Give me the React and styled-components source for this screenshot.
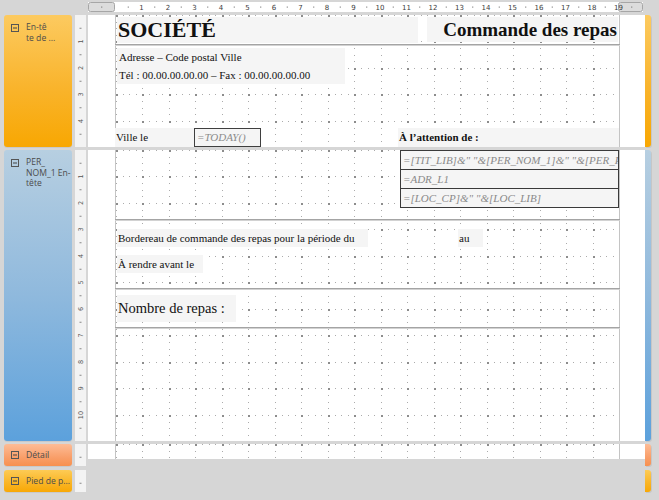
import React from "react";
import styled, { createGlobalStyle } from "styled-components";

const CM = 26.5;

const GlobalStyle = createGlobalStyle`
  html, body { margin: 0; padding: 0; background: #d6d6d6; }
  body { font-family: "Liberation Serif", "Times New Roman", serif; }
  #root { width: 659px; height: 500px; overflow: hidden; }
`;

/* ---------- grid background (designer dots) ---------- */
const gridSvg = (() => {
  const pos = [0, 7, 13, 20, 26, 33, 40, 46];
  let s = "<svg xmlns='http://www.w3.org/2000/svg' width='53' height='53'>";
  pos.forEach((p, i) => {
    if (i % 4 === 0) return;
    [0, 26].forEach((m) => {
      s += `<rect x='${m}' y='${p}' width='1' height='1' fill='#ababab'/>`;
      s += `<rect x='${p}' y='${m}' width='1' height='1' fill='#ababab'/>`;
    });
  });
  [0, 26].forEach((x) =>
    [0, 26].forEach((y) => {
      s += `<rect x='${x}' y='${y}' width='2' height='2' fill='#8c8c8c'/>`;
    })
  );
  s += "</svg>";
  return `url("data:image/svg+xml;utf8,${encodeURIComponent(s)}")`;
})();

/* ---------- layout ---------- */
const Screen = styled.div`
  width: 659px;
  height: 500px;
  padding-top: 2px;
  box-sizing: border-box;
  display: flex;
  flex-direction: column;
`;

const TopRulerWrap = styled.div`
  margin-left: 88px;
  height: 10px;
  margin-bottom: 3px;
  display: flex;
`;

const Sections = styled.div`
  display: flex;
  flex-direction: column;
`;

const SectionRow = styled.div`
  display: flex;
  align-items: flex-start;
  height: ${(p) => p.$h}px;
  padding-left: 4px;
  margin-top: ${(p) => p.$gap || 0}px;
`;

const palettes = {
  orange: "linear-gradient(180deg, #fcca60 0%, #f9b42c 55%, #f8a702 100%)",
  blue: "linear-gradient(180deg, #b7cfe1 0%, #8fb9dd 50%, #5ca1dc 100%)",
  salmon: "linear-gradient(180deg, #fdbc96 0%, #f99f6a 60%, #f7904f 100%)",
  gold: "linear-gradient(180deg, #fdcb55 0%, #f9b424 60%, #f8a805 100%)",
};

const Band = styled.div`
  width: 68px;
  height: 100%;
  box-sizing: border-box;
  border-radius: 3px;
  background: ${(p) => palettes[p.$tone]};
  box-shadow: 0 1px 0 rgba(0, 0, 0, 0.06);
  display: flex;
  align-items: ${(p) => (p.$compact ? "center" : "flex-start")};
  gap: 7px;
  padding: ${(p) => (p.$compact ? "0 0 0 7px" : "9px 0 0 7px")};
`;

const BandLabel = styled.div`
  font-family: "Open Sans", "DejaVu Sans", sans-serif;
  font-size: 8.6px;
  line-height: 10.6px;
  color: #4b4b4b;
  margin-top: ${(p) => (p.$compact ? "0" : "-2px")};
  white-space: nowrap;
`;

const VRulerBox = styled.div`
  margin-left: 3px;
  width: 11px;
  height: 100%;
  background: #f3f3f3;
  flex: none;
`;

const Page = styled.div`
  margin-left: 2px;
  width: 557px;
  height: ${(p) => p.$h}px;
  background: #ffffff;
  display: flex;
  flex: none;
`;

const PageMargin = styled.div`
  width: ${(p) => p.$w}px;
  flex: none;
`;

const Canvas = styled.div`
  position: relative;
  width: 503px;
  flex: none;
  border-left: 1px solid #c4c4c4;
  border-right: 1px solid #c4c4c4;
  background-image: ${gridSvg};
  background-size: 53px 53px;
  background-position: 0 0;
`;

const EmptyPage = styled.div`
  margin-left: 2px;
  width: 557px;
  flex: none;
`;

const Strip = styled.div`
  width: 6px;
  height: 100%;
  flex: none;
  border-radius: 0 3px 3px 0;
  background: ${(p) => palettes[p.$tone]};
  box-shadow: 1px 1px 0 rgba(0, 0, 0, 0.07);
`;

/* ---------- report controls (free canvas) ---------- */
const Control = styled.div`
  position: absolute;
  left: ${(p) => p.$x}px;
  top: ${(p) => p.$y}px;
  width: ${(p) => p.$w}px;
  height: ${(p) => p.$h}px;
  box-sizing: border-box;
  background: #f5f5f5;
  color: #111;
  font-size: ${(p) => p.$size || 11}px;
  font-weight: ${(p) => (p.$bold ? 700 : 400)};
  display: flex;
  align-items: center;
  justify-content: ${(p) => (p.$right ? "flex-end" : "flex-start")};
  padding: 0 1px;
  white-space: nowrap;
  overflow: hidden;
  line-height: 1;
`;

const Framed = styled(Control)`
  border: 1px solid #3f3f3f;
  color: #8c8c8c;
  font-style: italic;
  padding-left: 2px;
`;

const AddressBlock = styled(Control)`
  flex-direction: column;
  align-items: flex-start;
  justify-content: flex-start;
  line-height: 18px;
  padding-left: 2px;
`;

const FormulaStack = styled.div`
  position: absolute;
  left: ${(p) => p.$x}px;
  top: ${(p) => p.$y}px;
  width: ${(p) => p.$w}px;
  box-sizing: border-box;
  border: 1px solid #3a3a3a;
  display: flex;
  flex-direction: column;
`;

const FormulaRow = styled.div`
  height: 18px;
  background: #f5f5f5;
  color: #8a8a8a;
  font-style: italic;
  font-size: 11px;
  display: flex;
  align-items: center;
  padding-left: 2px;
  white-space: nowrap;
  overflow: hidden;
  & + & {
    border-top: 1px solid #3a3a3a;
  }
`;

const HLine = styled.div`
  position: absolute;
  left: -1px;
  right: -1px;
  top: ${(p) => p.$y}px;
  height: 1px;
  background: #a4a4a4;
  box-shadow: 0 1px 0 #d2d2d2;
`;

/* ---------- drawings ---------- */
function MinusBox() {
  return (
    <svg width="8" height="8" viewBox="0 0 8 8" style={{ flex: "none" }}>
      <rect x="0.5" y="0.5" width="7" height="7" fill="none" stroke="#555" strokeWidth="1" />
      <rect x="2" y="3.5" width="4" height="1" fill="#444" />
    </svg>
  );
}

function TopRuler() {
  const marks = [];
  const origin = 27; // 115 - 88
  for (let n = -1; n <= 20; n++) {
    const x = origin + n * CM;
    if (n >= 1 && n <= 19) {
      marks.push(
        <text key={"t" + n} x={x} y={7.6} fontSize="7" textAnchor="middle" fill="#3c3c3c"
          fontFamily="'DejaVu Sans', sans-serif">{n}</text>
      );
    }
    const hx = x + CM / 2;
    if (hx > 0 && hx < 555) {
      marks.push(<rect key={"h" + n} x={hx - 0.5} y={4.5} width={1} height={1.2} fill="#777" />);
    }
  }
  return (
    <svg width="555" height="10" viewBox="0 0 555 10" style={{ display: "block" }}>
      <rect x="0" y="0" width="555" height="10" fill="#ffffff" />
      <rect x="0.5" y="0.5" width="26" height="9" rx="2" fill="#dcdcdc" stroke="#a6a6a6" />
      <rect x="530.5" y="0.5" width="24" height="9" rx="2" fill="#dcdcdc" stroke="#a6a6a6" />
      {marks}
    </svg>
  );
}

function VRuler({ h }) {
  const marks = [];
  for (let n = 0; n * CM < h + CM; n++) {
    const y = n * CM;
    if (n >= 1 && y < h) {
      marks.push(
        <text key={"n" + n} x={0} y={0} fontSize="6.5" textAnchor="middle" fill="#555"
          fontFamily="'DejaVu Sans', sans-serif"
          transform={`translate(7.8 ${y}) rotate(-90)`}>{n}</text>
      );
    }
    const hy = y + CM / 2;
    if (hy < h) {
      marks.push(<rect key={"h" + n} x={4.5} y={hy - 0.5} width={2} height={1} fill="#888" />);
    }
  }
  return (
    <VRulerBox>
      <svg width="11" height={h} viewBox={`0 0 11 ${h}`} style={{ display: "block" }}>
        {marks}
      </svg>
    </VRulerBox>
  );
}

function Section({ h, pageH, tone, label, compact, gap, children, noPage }) {
  return (
    <SectionRow $h={h} $gap={gap}>
      <Band $tone={tone} $compact={compact}>
        <MinusBox />
        <BandLabel $compact={compact}>{label}</BandLabel>
      </Band>
      <VRuler h={h} />
      {noPage ? (
        <EmptyPage />
      ) : (
        <Page $h={pageH ?? h}>
          <PageMargin $w={27} />
          <Canvas>{children}</Canvas>
          <PageMargin $w={25} />
        </Page>
      )}
      <Strip $tone={tone} />
    </SectionRow>
  );
}

export default function App() {
  return (
    <>
      <GlobalStyle />
      <Screen>
        <TopRulerWrap>
          <TopRuler />
        </TopRulerWrap>
        <Sections>
          <Section
            h={132}
            tone="orange"
            label={
              <>
                En-tê
                <br />
                te de ...
              </>
            }
          >
            <Control $x={1} $y={2} $w={301} $h={26} $size={22} $bold>
              SOCIÉTÉ
            </Control>
            <Control $x={311} $y={2} $w={191} $h={25} $size={19} $bold $right>
              Commande des repas
            </Control>
            <HLine $y={29} />
            <AddressBlock $x={1} $y={33} $w={228} $h={36}>
              <span>Adresse – Code postal Ville</span>
              <span>Tél : 00.00.00.00.00 – Fax : 00.00.00.00.00</span>
            </AddressBlock>
            <Control $x={-1} $y={113} $w={79} $h={19}>
              Ville le
            </Control>
            <Framed $x={78} $y={113} $w={67} $h={19}>
              =TODAY()
            </Framed>
            <Control $x={282} $y={113} $w={221} $h={19} $bold>
              À l’attention de :
            </Control>
          </Section>

          <Section
            h={291}
            gap={3}
            tone="blue"
            label={
              <>
                PER_
                <br />
                NOM_1 En-
                <br />
                tête
              </>
            }
          >
            <FormulaStack $x={284} $y={0} $w={219}>
              <FormulaRow>=[TIT_LIB]&amp;" "&amp;[PER_NOM_1]&amp;" "&amp;[PER_PRENOM]</FormulaRow>
              <FormulaRow>=ADR_L1</FormulaRow>
              <FormulaRow>=[LOC_CP]&amp;" "&amp;[LOC_LIB]</FormulaRow>
            </FormulaStack>
            <HLine $y={69} />
            <Control $x={1} $y={79} $w={251} $h={18}>
              Bordereau de commande des repas pour la période du
            </Control>
            <Control $x={342} $y={79} $w={25} $h={18}>
              au
            </Control>
            <Control $x={1} $y={105} $w={86} $h={18}>
              À rendre avant le
            </Control>
            <HLine $y={138} />
            <Control $x={1} $y={145} $w={119} $h={27} $size={14.5}>
              Nombre de repas :
            </Control>
            <HLine $y={177} />
          </Section>

          <Section h={22} pageH={15} gap={3} tone="salmon" compact label="Détail" />

          <Section h={22} gap={4} tone="gold" compact noPage label="Pied de p..." />
        </Sections>
      </Screen>
    </>
  );
}
